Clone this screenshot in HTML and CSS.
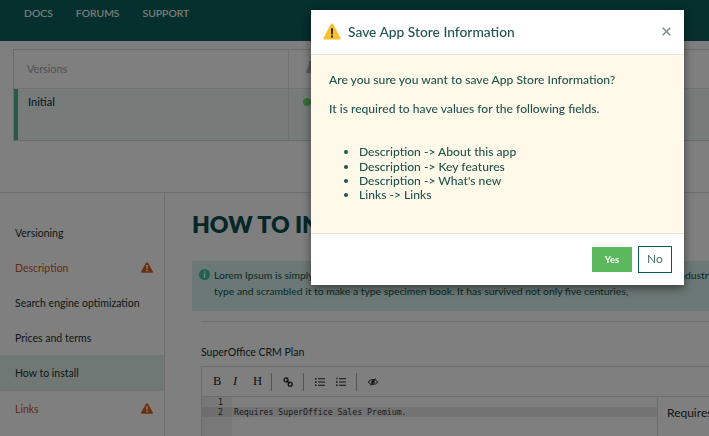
FILE: index.html
```html
<!DOCTYPE html>
<html lang="en">
<head>
    <meta charset="UTF-8">
    <meta name="viewport" content="width=device-width, initial-scale=1.0">
    <title>Save App Store Information</title>
    <link rel="stylesheet" href="styles.css">
</head>
<body>
    <header class="topbar">
        <a>DOCS</a>
        <a>FORUMS</a>
        <a>SUPPORT</a>
    </header>

    <section class="versions">
        <div class="versions-table">
            <div class="versions-head">
                <div class="versions-name">Versions</div>
                <div class="versions-status">
                    <svg class="flask" viewBox="0 0 10 12"><path d="M3 0h4v4l3 8H0l3-8z" fill="#b0b0b0"/></svg>
                </div>
            </div>
            <div class="versions-row">
                <div class="versions-name">Initial</div>
                <div class="versions-status"><span class="dot"></span></div>
            </div>
        </div>
    </section>

    <div class="content">
        <!-- Left menu -->
        <nav class="sidebar">
            <a class="nav-item">Versioning</a>
            <a class="nav-item warn">Description
                <svg class="warn-icon" viewBox="0 0 12 11"><path d="M6 .3c.4 0 .7.2.9.5l4.900 8.400c.4.7-.1 1.500-.9 1.500H1.100c-.8 0-1.300-.8-.9-1.500L5.100.8c.2-.3.5-.5.9-.5z" fill="#d8601c"/><path d="M5.200 3h1.600l-.2 4H5.400zM5.200 7.800h1.600v1.500H5.200z" fill="#fff"/></svg>
            </a>
            <a class="nav-item">Search engine optimization</a>
            <a class="nav-item">Prices and terms</a>
            <a class="nav-item active">How to install</a>
            <a class="nav-item warn">Links
                <svg class="warn-icon" viewBox="0 0 12 11"><path d="M6 .3c.4 0 .7.2.9.5l4.900 8.400c.4.7-.1 1.500-.9 1.500H1.100c-.8 0-1.300-.8-.9-1.500L5.100.8c.2-.3.5-.5.9-.5z" fill="#d8601c"/><path d="M5.200 3h1.600l-.2 4H5.400zM5.200 7.800h1.600v1.500H5.200z" fill="#fff"/></svg>
            </a>
        </nav>

        <main class="main">
            <h1>HOW TO INSTALL</h1>
            <div class="info">
                <svg class="info-icon" viewBox="0 0 12 12"><circle cx="6" cy="6" r="6" fill="#3fc4a0"/><path d="M5.200 2.400h1.600v1.500H5.200zM5.200 5h1.600v4.600H5.200z" fill="#fff"/></svg>
                <p>Lorem Ipsum is simply dummy text of the printing and typesetting industry. Lorem Ipsum has been the industry's<br>type and scrambled it to make a type specimen book. It has survived not only five centuries,</p>
            </div>
            <div class="plan">
                <label class="plan-label">SuperOffice CRM Plan</label>
                <div class="editor">
                    <div class="toolbar">
                        <span class="tool serif">B</span>
                        <span class="tool serif italic">I</span>
                        <span class="tool serif last">H</span>
                        <span class="sep"></span>
                        <svg class="tool-icon" viewBox="0 0 10 10"><circle cx="3" cy="3" r="2" fill="none" stroke="#222" stroke-width="1.300"/><circle cx="7.200" cy="7.200" r="2" fill="none" stroke="#222" stroke-width="1.300"/><path d="M3.500 3.500l3 3" stroke="#222" stroke-width="1.300"/></svg>
                        <span class="sep"></span>
                        <svg class="tool-icon" viewBox="0 0 10 10"><path d="M0 1h1.500v1.500H0zM0 4.300h1.500v1.500H0zM0 7.600h1.500v1.500H0zM3 1.200h7v1H3zM3 4.500h7v1H3zM3 7.800h7v1H3z" fill="#222"/></svg>
                        <svg class="tool-icon ol" viewBox="0 0 10 10"><path d="M.5 .5h1v2h-1zM0 4.300h1.500v1.500H0zM0 7.600h1.500v1.500H0zM3 1.200h7v1H3zM3 4.500h7v1H3zM3 7.800h7v1H3z" fill="#222"/></svg>
                        <span class="sep"></span>
                        <svg class="tool-icon" viewBox="0 0 10 10"><path d="M.3 5C2.500 1.800 7.500 1.800 9.700 5 7.500 8.200 2.500 8.200.3 5z" fill="none" stroke="#222" stroke-width="1"/><circle cx="5" cy="5" r="1.800" fill="#222"/><path d="M7.500 1.500l-5 7" stroke="#222" stroke-width="1"/></svg>
                    </div>
                    <div class="editor-body">
                        <div class="code">
                            <div class="code-line"><span class="gutter">1</span><span class="line-text"></span></div>
                            <div class="code-line current"><span class="gutter">2</span><span class="line-text">Requires SuperOffice Sales Premium.</span></div>
                            <div class="code-rest"></div>
                        </div>
                        <div class="preview">Requires SuperOffice Sales Premium.</div>
                    </div>
                </div>
            </div>
        </main>
    </div>

    <div class="overlay"></div>

    <!-- Confirm dialog -->
    <div class="modal">
        <div class="modal-head">
            <svg class="modal-warn" viewBox="0 0 18 17"><path d="M9 .4c.5 0 .9.2 1.100.7l7.500 14c.4.7-.1 1.500-.9 1.500H1.300c-.8 0-1.300-.8-.9-1.500l7.500-14C8.100.6 8.500.4 9 .4z" fill="#fbc02d"/><path d="M8 5.200h2l-.2 6.300H8.200zM8 12.500h2v2H8z" fill="#222"/></svg>
            <h2>Save App Store Information</h2>
            <svg class="close" viewBox="0 0 9 9"><path d="M.7 .7l7.600 7.600M8.300 .7L.7 8.300" stroke="#7d8a88" stroke-width="1.500"/></svg>
        </div>
        <div class="modal-body">
            <p>Are you sure you want to save App Store Information?</p>
            <p>It is required to have values for the following fields.</p>
            <ul>
                <li>Description -&gt; About this app</li>
                <li>Description -&gt; Key features</li>
                <li>Description -&gt; What's new</li>
                <li>Links -&gt; Links</li>
            </ul>
        </div>
        <div class="modal-foot">
            <button class="btn-yes">Yes</button>
            <button class="btn-no">No</button>
        </div>
    </div>
</body>
</html>
```

FILE: styles.css
```css
* {
    box-sizing: border-box;
}

html, body {
    height: 436px;
    overflow: hidden;
}

body {
    margin: 0;
    font-family: Lato, "Open Sans", sans-serif;
    font-size: 12px;
    color: #1d3f3f;
    background-color: #ffffff;
}

.topbar {
    height: 41px;
    background-color: #0a605c;
    padding: 6px 0 0 24px;
    display: flex;
    gap: 23px;
    font-size: 10.400px;
    line-height: 14px;
    font-weight: 500;
    color: #ffffff;
}

.versions {
    height: 152px;
    padding: 8px 0 0 13px;
    border-bottom: 1px solid #ddd;
    overflow: hidden;
}

.versions-table {
    width: 720px;
    height: 92px;
    border: 1px solid #d8d8d8;
}

.versions-head {
    height: 39px;
    display: flex;
    border-bottom: 1px solid #e4e4e4;
    color: #a0a0a0;
    line-height: 37px;
    font-size: 10.800px;
}

.versions-row {
    height: 51px;
    display: flex;
    background-color: #eef8f6;
    border-left: 4px solid #4fb78e;
    font-weight: 500;
    color: #12304a;
    font-size: 11px;
    line-height: 26px;
}

.versions-head .versions-name {
    width: 274px;
    padding-left: 13px;
}

.versions-row .versions-name {
    width: 270px;
    padding-left: 10px;
}

.versions-status {
    flex: 1;
    border-left: 1px solid #e4e4e4;
    padding-left: 14px;
}

.versions-head .versions-status {
    padding-left: 17px;
}

.flask {
    width: 10px;
    height: 12px;
}

.dot {
    display: inline-block;
    width: 8px;
    height: 8px;
    border-radius: 50%;
    background-color: #70dd70;
}

.content {
    display: flex;
    height: 243px;
    overflow: hidden;
}

.sidebar {
    width: 165px;
    flex-shrink: 0;
    border-right: 1px solid #dcdcdc;
    padding-top: 22px;
}

.nav-item {
    height: 35px;
    padding: 0 11px 0 15px;
    display: flex;
    align-items: center;
    justify-content: space-between;
    font-size: 10.500px;
    color: #1d3030;
    white-space: nowrap;
}

.nav-item.warn {
    color: #c8582a;
}

.nav-item.active {
    height: 36px;
    background-color: #e0f0ea;
}

.warn-icon {
    width: 12px;
    height: 11px;
}

.main {
    flex: 1;
    min-width: 0;
    padding: 16px 0 0 27px;
}

.main h1 {
    margin: 0;
    font-size: 23px;
    line-height: 31px;
    font-weight: 800;
    color: #0a4f50;
    white-space: nowrap;
}

.info {
    width: 540px;
    height: 50px;
    margin-top: 21px;
    padding: 6px 0 0 7px;
    display: flex;
    gap: 4px;
    background-color: #d9f0ea;
    color: #10524f;
    font-size: 10.350px;
    line-height: 16px;
    white-space: nowrap;
}

.info p {
    margin: 0;
}

.info-icon {
    width: 11px;
    height: 11px;
    margin-top: 2px;
    flex-shrink: 0;
}

.plan {
    margin: 10px 0 0 9px;
    padding-top: 22px;
    border-top: 1px solid #dcdcdc;
}

.plan-label {
    display: block;
    font-size: 10.500px;
    line-height: 16px;
    color: #12302f;
}

.editor {
    width: 560px;
    margin-top: 6px;
    border: 1px solid #d8d8d8;
    border-bottom: none;
}

.toolbar {
    height: 30px;
    display: flex;
    align-items: center;
    padding-left: 11px;
    border-bottom: 1px solid #d8d8d8;
}

.tool {
    width: 20px;
    font-size: 12.500px;
    color: #222;
}

.tool.last {
    width: 18px;
}

.serif {
    font-family: "Liberation Serif", serif;
}

.serif.italic {
    font-style: italic;
}

.sep {
    width: 1px;
    height: 18px;
    margin: 0 11px 0 0;
    background-color: #aaa;
}

.tool-icon {
    width: 10px;
    height: 10px;
    margin-right: 10px;
}

.tool-icon.ol {
    margin-left: 1px;
}

.editor-body {
    display: flex;
    height: 39px;
}

.code {
    width: 455px;
    flex-shrink: 0;
    font-family: "DejaVu Sans Mono", monospace;
    font-size: 8.200px;
    line-height: 10px;
    color: #333;
}

.code-line {
    display: flex;
    height: 10px;
}

.code-line.current {
    background-color: #e6e6e6;
}

.gutter {
    width: 30px;
    padding-right: 9px;
    text-align: right;
    background-color: #f0f0f0;
}

.current .gutter {
    background-color: #dcdcdc;
}

.line-text {
    padding-left: 2px;
    white-space: nowrap;
}

.code-rest {
    width: 30px;
    height: 19px;
    background-color: #f0f0f0;
}

.preview {
    flex: 1;
    border-left: 1px solid #d8d8d8;
    padding: 8px 0 0 9px;
    font-size: 12px;
    line-height: 16px;
    color: #1d3030;
    white-space: nowrap;
}

.overlay {
    position: fixed;
    inset: 0;
    background-color: rgba(0, 0, 0, 0.5);
}

.modal {
    position: fixed;
    top: 10px;
    left: 311px;
    width: 373px;
    height: 275px;
    display: flex;
    flex-direction: column;
    background-color: #ffffff;
    box-shadow: 0 3px 9px rgba(0, 0, 0, 0.5);
}

.modal-head {
    height: 45px;
    flex-shrink: 0;
    display: flex;
    align-items: center;
    padding: 0 13px 1px 12px;
    border-bottom: 1px solid #e5e5e5;
}

.modal-warn {
    width: 18px;
    height: 17px;
}

.modal-head h2 {
    flex: 1;
    margin: 0 0 0 7px;
    font-size: 13.800px;
    font-weight: 500;
    color: #20544f;
}

.close {
    width: 9px;
    height: 9px;
}

.modal-body {
    flex: 1;
    padding: 17px 18px 0;
    background-color: #fff9e9;
    border-bottom: 1px solid #e5e5e5;
    font-size: 12.100px;
    font-weight: 500;
    line-height: 16px;
    color: #20544f;
}

.modal-body p {
    margin: 0 0 13px;
}

.modal-body ul {
    margin: 28px 0 0;
    padding-left: 30px;
    line-height: 14px;
}

.modal-body li:first-child {
    margin-bottom: 1px;
}

.modal-foot {
    height: 51px;
    flex-shrink: 0;
    display: flex;
    justify-content: flex-end;
    align-items: center;
    gap: 6px;
    padding-right: 12px;
}

.btn-yes {
    width: 40px;
    height: 25px;
    padding: 0;
    border: none;
    background-color: #5cb85c;
    color: #ffffff;
    font-family: inherit;
    font-size: 9.500px;
    font-weight: 700;
}

.btn-no {
    width: 34px;
    height: 27px;
    padding: 0 0 3px;
    border: 1px solid #0f5a50;
    background-color: #ffffff;
    color: #4a6f6b;
    font-family: inherit;
    font-size: 12px;
}
```
